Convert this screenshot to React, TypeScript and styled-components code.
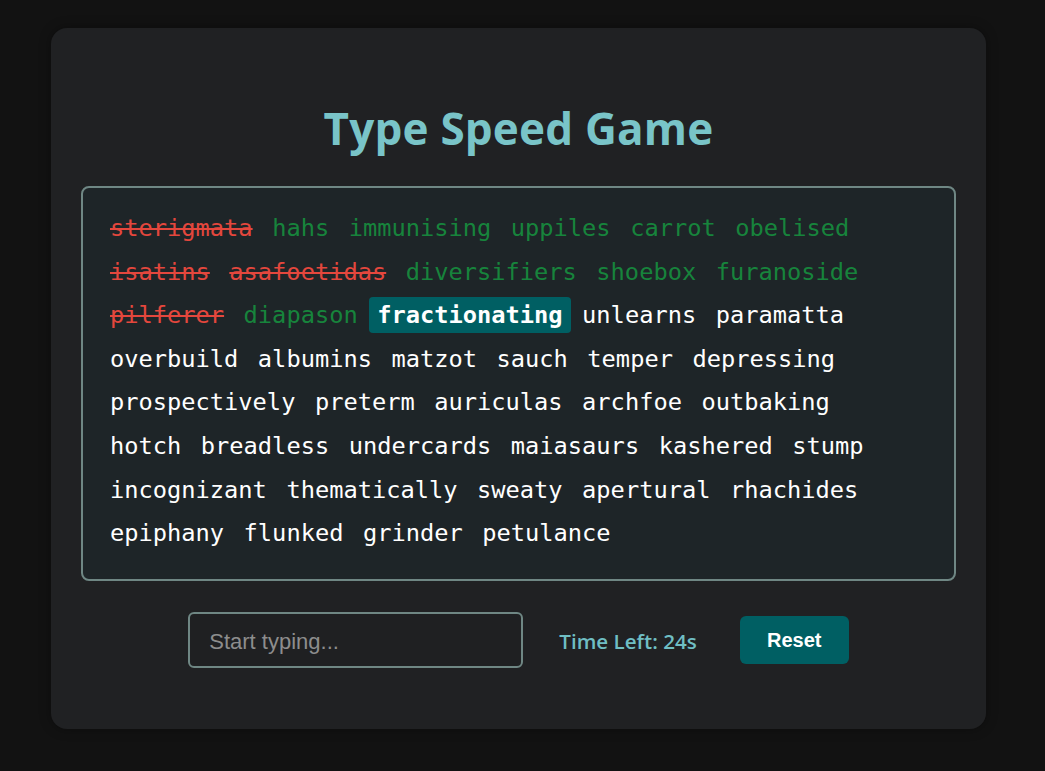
import React from "react";
import styled, { createGlobalStyle } from "styled-components";

const Global = createGlobalStyle`
  html, body { margin: 0; padding: 0; background: #121212; }
  body { font-family: "Open Sans", "Liberation Sans", sans-serif; }
`;

const Page = styled.div`
  min-height: 771px;
  box-sizing: border-box;
  padding: 28px 0 0 51px;
`;

const Card = styled.div`
  width: 935px;
  box-sizing: border-box;
  background: #202123;
  border-radius: 16px;
  padding: 70px 30px 61px;
  display: flex;
  flex-direction: column;
  align-items: center;
  box-shadow: 0 0 12px rgba(0, 0, 0, 0.35);
`;

const Title = styled.h1`
  margin: 0 0 28px;
  font-family: "Open Sans", sans-serif;
  font-weight: 700;
  font-size: 44px;
  line-height: 60px;
  letter-spacing: 0.2px;
  color: #79c4c8;
`;

const WordBox = styled.div`
  width: 100%;
  box-sizing: border-box;
  border: 2px solid #6f8784;
  border-radius: 8px;
  background: #1e2528;
  padding: 22px 30px 28px 19px;
  display: flex;
  flex-wrap: wrap;
  gap: 7.6px 3.5px;
  margin-bottom: 31px;
`;

type WordState = "wrong" | "right" | "current" | "pending";

const colors: Record<WordState, string> = {
  wrong: "#e4473d",
  right: "#17843c",
  current: "#ffffff",
  pending: "#ffffff",
};

const Word = styled.span<{ $state: WordState }>`
  display: inline-block;
  padding: 4px 8px;
  line-height: 28px;
  font-family: "DejaVu Sans Mono", "Liberation Mono", monospace;
  font-size: 23.7px;
  border-radius: 4px;
  color: ${(p) => colors[p.$state]};
  text-decoration: ${(p) => (p.$state === "wrong" ? "line-through" : "none")};
  text-decoration-thickness: 2px;
  font-weight: ${(p) => (p.$state === "current" ? 700 : 400)};
  background: ${(p) => (p.$state === "current" ? "#005f63" : "transparent")};
`;

const Controls = styled.div`
  display: flex;
  align-items: center;
  gap: 36px;
  margin-left: 0;
`;

const Input = styled.input`
  width: 335px;
  height: 56px;
  box-sizing: border-box;
  border: 2px solid #6f8784;
  border-radius: 6px;
  background: #1f2022;
  padding: 3px 19px 0;
  font-family: "Liberation Sans", Arial, sans-serif;
  font-size: 22px;
  color: #ffffff;
  outline: none;
  &::placeholder {
    color: #8d8d8d;
  }
`;

const Timer = styled.span`
  font-family: "Open Sans", sans-serif;
  font-weight: 600;
  font-size: 20.6px;
  color: #6fbec3;
  margin-right: 7px;
  margin-top: 2px;
`;

const ResetButton = styled.button`
  width: 109px;
  height: 48px;
  border: none;
  border-radius: 6px;
  background: #005f63;
  color: #ffffff;
  font-family: "Liberation Sans", Arial, sans-serif;
  font-weight: 700;
  font-size: 20px;
  cursor: pointer;
  padding: 0;
`;

const words: [string, WordState][] = [
  ["sterigmata", "wrong"],
  ["hahs", "right"],
  ["immunising", "right"],
  ["uppiles", "right"],
  ["carrot", "right"],
  ["obelised", "right"],
  ["isatins", "wrong"],
  ["asafoetidas", "wrong"],
  ["diversifiers", "right"],
  ["shoebox", "right"],
  ["furanoside", "right"],
  ["pilferer", "wrong"],
  ["diapason", "right"],
  ["fractionating", "current"],
  ["unlearns", "pending"],
  ["paramatta", "pending"],
  ["overbuild", "pending"],
  ["albumins", "pending"],
  ["matzot", "pending"],
  ["sauch", "pending"],
  ["temper", "pending"],
  ["depressing", "pending"],
  ["prospectively", "pending"],
  ["preterm", "pending"],
  ["auriculas", "pending"],
  ["archfoe", "pending"],
  ["outbaking", "pending"],
  ["hotch", "pending"],
  ["breadless", "pending"],
  ["undercards", "pending"],
  ["maiasaurs", "pending"],
  ["kashered", "pending"],
  ["stump", "pending"],
  ["incognizant", "pending"],
  ["thematically", "pending"],
  ["sweaty", "pending"],
  ["apertural", "pending"],
  ["rhachides", "pending"],
  ["epiphany", "pending"],
  ["flunked", "pending"],
  ["grinder", "pending"],
  ["petulance", "pending"],
];

export default function App() {
  return (
    <>
      <Global />
      <Page>
        <Card>
          <Title>Type Speed Game</Title>
          <WordBox>
            {words.map(([w, s], i) => (
              <Word key={i} $state={s}>
                {w}
              </Word>
            ))}
          </WordBox>
          <Controls>
            <Input placeholder="Start typing..." />
            <Timer>Time Left: 24s</Timer>
            <ResetButton>Reset</ResetButton>
          </Controls>
        </Card>
      </Page>
    </>
  );
}
